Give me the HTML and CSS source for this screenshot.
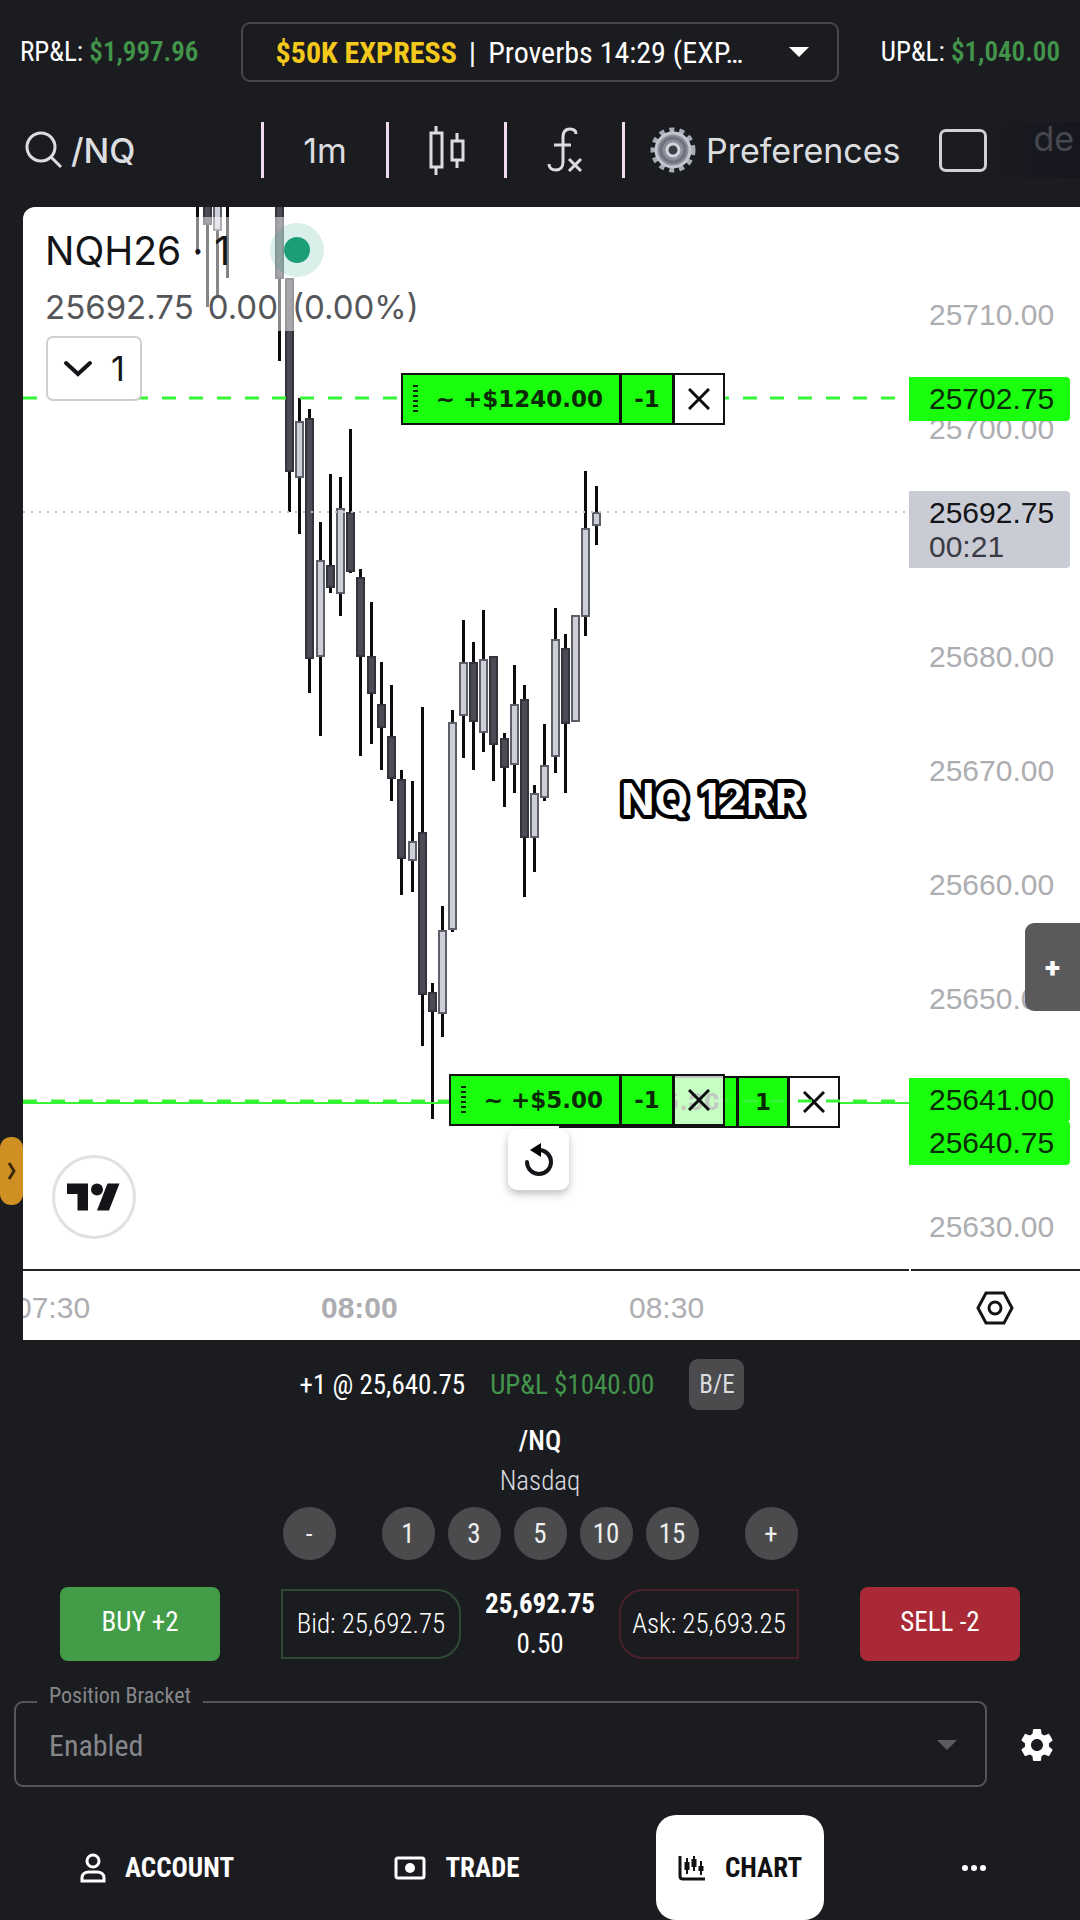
FILE: index.html
```html
<!DOCTYPE html>
<html lang="en">
<head>
    <meta charset="UTF-8">
    <meta name="viewport" content="width=device-width, initial-scale=1.0">
    <title>/NQ Chart</title>
    <link rel="stylesheet" href="styles.css">
</head>
<body>
    <header class="account-bar">
        <div class="pnl">RP&amp;L: <strong>$1,997.96</strong></div>
        <div class="account-select">
            <label for="account">$50K EXPRESS</label>
            <span class="divider">|</span>
            <select id="account">
                <option>Proverbs 14:29 (EXP…</option>
            </select>
            <svg class="caret" viewBox="0 0 20 10"><path d="M0 0h20L10 10z"/></svg>
        </div>
        <div class="pnl">UP&amp;L: <strong>$1,040.00</strong></div>
    </header>

    <div class="toolbar">
        <button class="tool tool-search" type="button">
            <svg width="38" height="38" viewBox="0 0 38 38"><circle cx="16" cy="16" r="14"/><path d="M26 26l10 10"/></svg>
            /NQ
        </button>
        <button class="tool" type="button">1m</button>
        <button class="tool" type="button" aria-label="Chart style">
            <svg width="38" height="52" viewBox="0 0 38 52"><path d="M3 9h11v34H3zM8 2v7M8 43v8M24 17h11v19H24zM29 9v8M29 36v8"/></svg>
        </button>
        <button class="tool" type="button" aria-label="Indicators">
            <svg width="36" height="46" viewBox="0 0 36 46"><path d="M29 7c0-4-3-5-6-5-5 0-7 3-7 8v25c0 5-3 8-7 8-4 0-7-2-7-6M7 18h17M22 32l12 12M34 32L22 44"/></svg>
        </button>
        <button class="tool tool-preferences" type="button">
            <svg class="cog" width="46" height="46" viewBox="0 0 46 46">
                <circle class="cog-teeth" cx="23" cy="23" r="20"/>
                <circle class="cog-body" cx="23" cy="23" r="17"/>
                <circle class="cog-ring" cx="23" cy="23" r="12"/>
                <circle class="cog-hub" cx="23" cy="23" r="6"/>
            </svg>
            Preferences
        </button>
        <button class="layout-box" type="button" aria-label="Layout"></button>
        <div class="saved-name">de</div>
    </div>

    <main class="chart">
        <section class="plot">
            <svg class="candles" width="886" height="1064" viewBox="23 207 886 1064">
                <g id="candles"></g>
                <path class="line-last" d="M23 512H909"/>
                <path class="line-entry" d="M23 1103H909"/>
                <path class="line-order" d="M23 398H909"/>
            </svg>

            <div class="legend">
                <div class="legend-title">NQH26 · 1 <span class="status"></span></div>
                <div class="legend-values"><span>25692.75</span><span>0.00</span><span>(0.00%)</span></div>
            </div>
            <button class="legend-toggle" type="button">
                <svg width="30" height="18" viewBox="0 0 30 18"><path d="M3 3l12 11L27 3"/></svg>
                1
            </button>

            <div class="order order-target">
                <span class="order-pnl"><i class="grip"></i>~ +$1240.00</span>
                <span class="order-qty">-1</span>
                <button class="order-close" type="button" aria-label="Cancel order"><svg width="22" height="22" viewBox="0 0 22 22"><path d="M1 1l20 20M21 1L1 21"/></svg></button>
            </div>

            <svg class="caption" width="210" height="56" viewBox="0 0 210 56"><text x="6" y="43">NQ 12RR</text></svg>

            <div class="order order-position">
                <span class="order-pnl">+$5.00</span>
                <span class="order-qty">1</span>
                <button class="order-close" type="button" aria-label="Close position"><svg width="22" height="22" viewBox="0 0 22 22"><path d="M1 1l20 20M21 1L1 21"/></svg></button>
            </div>
            <svg class="stop-line" width="886" height="4" viewBox="0 0 886 4"><path class="line-order" d="M0 2H886"/></svg>
            <button class="reset" type="button" aria-label="Reset chart">
                <svg width="30" height="34" viewBox="0 0 30 34"><path class="arc" d="M3 19a12 12 0 1 0 12-12"/><path class="head" d="M6 7L17 0v14z"/></svg>
            </button>
            <div class="order order-stop">
                <span class="order-pnl"><i class="grip"></i>~ +$5.00</span>
                <span class="order-qty">-1</span>
                <button class="order-close" type="button" aria-label="Cancel order"><svg width="22" height="22" viewBox="0 0 22 22"><path d="M1 1l20 20M21 1L1 21"/></svg></button>
            </div>

            <a class="tv-logo" href="#" aria-label="TradingView">
                <svg width="54" height="42" viewBox="0 0 36 28"><path d="M14 23H7V12H0V5h14zM28 23h-8l7-18h8z"/><circle cx="20" cy="9" r="4"/></svg>
            </a>
        </section>

        <aside class="price-axis">
            <ol class="prices">
                <li>25710.00</li>
                <li>25700.00</li>
                <li></li>
                <li>25680.00</li>
                <li>25670.00</li>
                <li>25660.00</li>
                <li>25650.00</li>
                <li></li>
                <li>25630.00</li>
            </ol>
            <div class="tag tag-target">25702.75</div>
            <div class="tag tag-last">25692.75<small>00:21</small></div>
            <div class="tag tag-stop">25641.00</div>
            <div class="tag tag-entry">25640.75</div>
        </aside>

        <div class="time-axis">
            <span class="time time-first">07:30</span>
            <span class="time time-hour">08:00</span>
            <span class="time time-last">08:30</span>
        </div>
        <button class="axis-settings" type="button" aria-label="Axis settings">
            <svg width="38" height="34" viewBox="0 0 38 34"><path d="M10 2h18l8 15-8 15H10L2 17z"/><circle cx="19" cy="17" r="6"/></svg>
        </button>

        <button class="side-tab" type="button" aria-label="Open panel">
            <svg width="10" height="20" viewBox="0 0 10 20"><path d="M2 2l5 8-5 8"/></svg>
        </button>
        <button class="add-tab" type="button">+</button>
    </main>

    <section class="ticket">
        <div class="position">
            <span>+1 @ 25,640.75</span>
            <span class="position-pnl">UP&amp;L $1040.00</span>
            <button class="breakeven" type="button">B/E</button>
        </div>
        <h1 class="symbol">/NQ</h1>
        <p class="symbol-name">Nasdaq</p>

        <div class="quantities">
            <button class="round step" type="button">-</button>
            <button class="round" type="button">1</button>
            <button class="round" type="button">3</button>
            <button class="round" type="button">5</button>
            <button class="round" type="button">10</button>
            <button class="round" type="button">15</button>
            <button class="round step" type="button">+</button>
        </div>

        <div class="order-row">
            <button class="trade buy" type="button">BUY +2</button>
            <div class="quotes">
                <div class="quote bid">Bid: 25,692.75</div>
                <div class="last"><strong>25,692.75</strong><span>0.50</span></div>
                <div class="quote ask">Ask: 25,693.25</div>
            </div>
            <button class="trade sell" type="button">SELL -2</button>
        </div>

        <div class="bracket-row">
            <fieldset class="bracket">
                <legend><label for="bracket">Position Bracket</label></legend>
                <select id="bracket" disabled>
                    <option>Enabled</option>
                </select>
                <svg class="caret" viewBox="0 0 20 10"><path d="M0 0h20L10 10z"/></svg>
            </fieldset>
            <button class="bracket-settings" type="button" aria-label="Bracket settings">
                <svg width="40" height="40" viewBox="0 0 24 24"><path d="M19.14 12.94c.04-.3.06-.61.06-.94s-.02-.64-.07-.94l2.03-1.58c.18-.14.23-.41.12-.61l-1.92-3.32c-.12-.22-.37-.29-.59-.22l-2.39.96c-.5-.38-1.03-.7-1.62-.94l-.36-2.54c-.04-.24-.24-.41-.48-.41h-3.84c-.24 0-.43.17-.47.41l-.36 2.54c-.59.24-1.13.57-1.62.94l-2.39-.96c-.22-.08-.47 0-.59.22L2.74 8.87c-.12.21-.08.47.12.61l2.03 1.58c-.05.3-.09.63-.09.94s.02.64.07.94l-2.03 1.58c-.18.14-.23.41-.12.61l1.92 3.32c.12.22.37.29.59.22l2.39-.96c.5.38 1.03.7 1.62.94l.36 2.54c.05.24.24.41.48.41h3.84c.24 0 .44-.17.47-.41l.36-2.54c.59-.24 1.13-.56 1.62-.94l2.39.96c.22.08.47 0 .59-.22l1.92-3.32c.12-.22.07-.47-.12-.61l-2.01-1.58zM12 15.6c-1.98 0-3.6-1.62-3.6-3.6s1.62-3.6 3.6-3.6 3.6 1.62 3.6 3.6-1.62 3.6-3.6 3.6z"/></svg>
            </button>
        </div>
    </section>

    <nav class="tabs">
        <a class="tab" href="#">
            <svg width="26" height="30" viewBox="0 0 26 30"><circle cx="13" cy="8" r="6"/><path d="M2 28v-3c0-4 3-6 7-6h8c4 0 7 2 7 6v3z"/></svg>
            ACCOUNT
        </a>
        <a class="tab" href="#">
            <svg width="32" height="24" viewBox="0 0 32 24"><rect x="2" y="2" width="28" height="20" rx="2"/><circle class="solid" cx="16" cy="12" r="5"/></svg>
            TRADE
        </a>
        <a class="tab active" href="#">
            <svg width="28" height="26" viewBox="0 0 28 26"><path d="M2 1v20c0 2 1 3 3 3h22"/><path class="wicks" d="M9 3v16M16 1v15M23 6v14"/><path class="bars" d="M9 7v8M16 4v8M23 11v5"/></svg>
            CHART
        </a>
        <a class="tab more" href="#" aria-label="More">
            <svg width="24" height="6" viewBox="0 0 24 6"><circle class="solid" cx="3" cy="3" r="3"/><circle class="solid" cx="12" cy="3" r="3"/><circle class="solid" cx="21" cy="3" r="3"/></svg>
        </a>
    </nav>

    <script src="chart.js"></script>
</body>
</html>
```
FILE: styles.css
```css
* {
    margin: 0;
    padding: 0;
    box-sizing: border-box;
}

body {
    font-family: 'Roboto Condensed', Roboto, sans-serif;
    font-size: 27px;
    background: #1b1c20;
    color: #fff;
    min-height: 100vh;
    display: flex;
    flex-direction: column;
    overflow-x: hidden;
}

button,
select {
    font: inherit;
    color: inherit;
    background: none;
    border: none;
    appearance: none;
}

svg {
    display: block;
    flex: none;
}

/* account bar */
.account-bar {
    display: flex;
    align-items: center;
    justify-content: space-between;
    padding: 22px 20px 0;
}

.pnl strong {
    color: #43944b;
    font-weight: 600;
}

.account-select {
    display: flex;
    align-items: center;
    width: 598px;
    height: 60px;
    padding: 0 28px 0 33px;
    border: 2px solid #47484b;
    border-radius: 9px;
    font-size: 30px;
}

.account-select label {
    color: #f3c91c;
    font-weight: 700;
}

.account-select .divider {
    margin: 0 12px;
}

.account-select select {
    flex: 1;
}

.caret {
    width: 20px;
    height: 10px;
    fill: #fff;
}

/* toolbar */
.toolbar {
    display: grid;
    grid-template-columns: 261px 125px 118px 118px auto auto 1fr;
    height: 56px;
    margin: 40px 0 29px;
    font-family: Inter, sans-serif;
    font-size: 34px;
    color: #dcdde0;
}

.tool {
    display: flex;
    align-items: center;
    justify-content: center;
    border-left: 3px solid #f0dcee;
}

.tool svg {
    fill: none;
    stroke: #dcdde0;
    stroke-width: 3;
}

.tool-search {
    justify-content: flex-start;
    gap: 8px;
    padding-left: 25px;
    border: none;
    font-weight: 500;
}

.tool-preferences {
    gap: 10px;
    padding-left: 25px;
}

.tool .cog circle {
    stroke: #a9adb8;
}

.tool .cog .cog-teeth {
    stroke-width: 5;
    stroke-dasharray: 5 5;
}

.tool .cog .cog-body {
    fill: #8b8f9b;
    stroke: #c3c6cf;
}

.tool .cog .cog-ring {
    stroke: #6f727d;
}

.tool .cog .cog-hub {
    fill: #3c3e46;
    stroke: #d4d6de;
}

.layout-box {
    width: 48px;
    height: 43px;
    margin: 7px 0 0 38px;
    border: 3px solid #cfd0d2;
    border-radius: 7px;
}

.saved-name {
    padding: 0 0 16px 47px;
    line-height: 34px;
    background: linear-gradient(90deg, #1b1c20, #15161f);
    color: #47484d;
    white-space: nowrap;
}

/* chart */
.chart {
    position: relative;
    flex: 1;
    display: grid;
    grid-template-columns: 1fr 171px;
    grid-template-rows: 1fr 69px;
    margin-left: 23px;
    background: #fff;
    border-top-left-radius: 12px;
    color: #131417;
    font-family: 'Liberation Sans', Arial, sans-serif;
    font-size: 30px;
}

.plot {
    position: relative;
    min-height: 1064px;
    overflow: hidden;
    border-bottom: 2px solid #222327;
    border-top-left-radius: 12px;
}

.candles {
    position: absolute;
    top: 0;
    left: 0;
}

.wick {
    stroke: #0c0c0e;
    stroke-width: 3;
}

.body {
    fill: #4a4b54;
    stroke: #32333b;
    stroke-width: 2;
}

.body.up {
    fill: #cdcfd8;
    stroke: #5d5e67;
}

.line-last {
    stroke: #c4c6cc;
    stroke-width: 2;
    stroke-dasharray: 2 6;
}

.line-entry {
    stroke: #35f535;
    stroke-width: 2;
}

.line-order {
    stroke: #35f535;
    stroke-width: 3;
    stroke-dasharray: 14 14 14 14 14 13;
}

.stop-line {
    position: absolute;
    top: 892px;
    left: 0;
}

.legend {
    position: absolute;
    top: 10px;
    left: 13px;
    padding-left: 9px;
    background: rgba(255, 255, 255, 0.5);
    font-family: Inter, sans-serif;
}

.legend-title {
    display: flex;
    align-items: center;
    gap: 54px;
    height: 66px;
    font-size: 39px;
}

.status {
    width: 26px;
    height: 26px;
    border-radius: 50%;
    background: #1b9e77;
    box-shadow: 0 0 0 14px rgba(27, 158, 119, 0.16);
}

.legend-values {
    display: flex;
    gap: 14px;
    height: 48px;
    line-height: 48px;
    font-size: 33px;
    color: #55565a;
}

.legend-toggle {
    position: absolute;
    top: 129px;
    left: 23px;
    display: flex;
    align-items: center;
    justify-content: center;
    gap: 18px;
    width: 96px;
    height: 65px;
    border: 2px solid #cfcfd2;
    border-radius: 7px;
    background: #fff;
    font-family: Inter, sans-serif;
    font-size: 34px;
}

.legend-toggle svg {
    fill: none;
    stroke: #131417;
    stroke-width: 4;
    stroke-linecap: round;
}

.order {
    position: absolute;
    display: flex;
    height: 52px;
    border: 2px solid #111;
    font-family: 'DejaVu Sans', sans-serif;
    font-size: 23px;
    font-weight: 700;
    color: #0b2a06;
}

.order-pnl,
.order-qty {
    display: flex;
    align-items: center;
    background: #1aff0d;
    border-right: 3px solid #111;
}

.order-pnl {
    flex: 1;
    justify-content: flex-end;
    padding: 0 16px 0 10px;
    white-space: pre;
}

.grip {
    width: 5px;
    height: 29px;
    margin-right: auto;
    background: repeating-linear-gradient(#0b2a06 0 2px, transparent 2px 5px);
}

.order-qty {
    width: 53px;
    justify-content: center;
}

.order-close {
    display: flex;
    align-items: center;
    justify-content: center;
    width: 48px;
    background: #fff;
}

.order-close svg {
    fill: none;
    stroke: #0c0c0e;
    stroke-width: 3;
}

.order-target {
    top: 166px;
    left: 378px;
    width: 324px;
}

.order-position {
    top: 869px;
    left: 536px;
    width: 281px;
}

.order-position .order-qty {
    width: 51px;
}

.order-stop {
    top: 867px;
    left: 426px;
    width: 276px;
}

.order-stop .order-close {
    background: rgba(255, 255, 255, 0.75);
}

.caption {
    position: absolute;
    top: 565px;
    left: 592px;
    font-family: Inter, sans-serif;
    font-size: 44px;
    font-weight: 700;
    fill: #fff;
    stroke: #000;
    stroke-width: 8px;
    stroke-linejoin: round;
    paint-order: stroke fill;
}

.reset {
    position: absolute;
    top: 922px;
    left: 485px;
    display: flex;
    align-items: center;
    justify-content: center;
    width: 61px;
    height: 61px;
    border-radius: 9px;
    background: #fff;
    box-shadow: 0 4px 8px rgba(0, 0, 0, 0.25);
}

.reset .arc {
    fill: none;
    stroke: #131417;
    stroke-width: 4;
    stroke-linecap: round;
}

.tv-logo {
    position: absolute;
    bottom: 30px;
    left: 29px;
    display: flex;
    align-items: center;
    justify-content: center;
    width: 84px;
    height: 84px;
    border: 3px solid #e0e1e4;
    border-radius: 50%;
    background: #fff;
    fill: #131417;
}

.price-axis {
    position: relative;
    border-bottom: 2px solid #222327;
    margin-left: 2px;
}

.prices {
    padding-top: 51px;
    list-style: none;
    color: #adaeb1;
}

.prices li {
    height: 114px;
    padding-left: 18px;
    line-height: 114px;
}

.prices li:last-child {
    height: 90px;
}

.tag {
    position: absolute;
    left: -2px;
    right: 10px;
    height: 44px;
    padding-left: 20px;
    line-height: 44px;
    border-radius: 0 4px 4px 0;
    background: #1aff0d;
    color: #0b2a06;
}

.tag small {
    display: block;
    margin-top: -8px;
    font-size: 30px;
    line-height: 40px;
    color: #3a3b42;
}

.tag-target {
    top: 170px;
}

.tag-last {
    top: 284px;
    height: 77px;
    background: #c9cbd5;
    color: #131417;
}

.tag-stop {
    top: 871px;
}

.tag-entry {
    top: 914px;
}

.time-axis {
    position: relative;
    overflow: hidden;
    line-height: 74px;
    color: #adaeb1;
}

.time {
    position: absolute;
}

.time-first {
    left: -8px;
}

.time-hour {
    left: 298px;
    font-weight: 700;
}

.time-last {
    left: 606px;
}

.axis-settings {
    display: flex;
    align-items: center;
    justify-content: center;
    padding-top: 4px;
}

.axis-settings svg {
    fill: none;
    stroke: #131417;
    stroke-width: 3;
}

.side-tab {
    position: absolute;
    top: 930px;
    left: -23px;
    display: flex;
    align-items: center;
    justify-content: center;
    width: 23px;
    height: 68px;
    border-radius: 11px;
    background: #d08f22;
}

.side-tab svg {
    fill: none;
    stroke: #3c2a08;
    stroke-width: 3;
}

.add-tab {
    position: absolute;
    top: 716px;
    right: 0;
    width: 55px;
    height: 88px;
    border-radius: 9px 0 0 9px;
    background: #5a5a5b;
    color: #fff;
    font-family: Roboto, sans-serif;
    font-size: 28px;
    font-weight: 900;
}

/* order ticket */
.ticket {
    padding-top: 19px;
}

.position {
    display: flex;
    align-items: center;
    justify-content: center;
    gap: 25px;
    height: 51px;
    padding-right: 36px;
}

.position-pnl {
    color: #43944b;
}

.breakeven {
    width: 55px;
    height: 51px;
    margin-left: 10px;
    border-radius: 9px;
    background: #4b4b4d;
    color: #dcdde0;
    font-size: 25px;
}

.symbol {
    margin-top: 12px;
    text-align: center;
    font-size: 27px;
    font-weight: 500;
    line-height: 38px;
}

.symbol-name {
    text-align: center;
    line-height: 42px;
    font-weight: 300;
    color: #dcdde0;
}

.quantities {
    display: flex;
    justify-content: center;
    gap: 13px;
    margin-top: 5px;
}

.round {
    width: 53px;
    height: 53px;
    border-radius: 50%;
    background: #4b4b4d;
    color: #eee;
}

.step:first-child {
    margin-right: 33px;
}

.step:last-child {
    margin-left: 33px;
}

.order-row {
    display: flex;
    align-items: center;
    justify-content: space-between;
    height: 74px;
    margin-top: 27px;
    padding: 0 60px;
}

.trade {
    width: 160px;
    height: 74px;
    padding-bottom: 4px;
    border-radius: 8px;
}

.buy {
    background: #439d48;
}

.sell {
    background: #a92a36;
}

.quotes {
    display: flex;
    align-items: center;
}

.quote {
    display: flex;
    align-items: center;
    justify-content: center;
    width: 180px;
    height: 70px;
    border: 2px solid #2e4a37;
    font-weight: 300;
    white-space: nowrap;
}

.bid {
    border-radius: 0 24px 24px 0;
}

.ask {
    border-color: #4a1f2a;
    border-radius: 24px 0 0 24px;
}

.last {
    display: flex;
    flex-direction: column;
    align-items: center;
    width: 158px;
    line-height: 40px;
}

.bracket-row {
    display: flex;
    align-items: flex-end;
    margin-top: 23px;
    padding: 0 20px 0 14px;
}

.bracket {
    position: relative;
    flex: 1;
    height: 103px;
    padding: 0 27px 0 21px;
    border: 2px solid #555659;
    border-radius: 9px;
    color: #86878a;
    font-size: 30px;
}

.bracket legend {
    padding: 0 12px 12px;
    font-size: 22px;
    line-height: 24px;
}

.bracket select {
    width: 100%;
    height: 50px;
    padding-left: 12px;
    opacity: 1;
}

.bracket .caret {
    position: absolute;
    right: 28px;
    bottom: 35px;
    fill: #5b5c5f;
}

.bracket-settings {
    margin: 0 3px 22px 30px;
    fill: #fff;
}

/* bottom tabs */
.tabs {
    display: grid;
    grid-template-columns: 314px 286px 280px 1fr;
    justify-items: center;
    margin-top: 28px;
    padding-right: 12px;
}

.tab {
    display: flex;
    align-items: center;
    justify-content: center;
    gap: 19px;
    height: 105px;
    padding: 0 22px;
    color: #fff;
    font-size: 27px;
    font-weight: 700;
    text-decoration: none;
}

.tab svg {
    fill: none;
    stroke: currentColor;
    stroke-width: 3;
}

.tab .solid {
    fill: currentColor;
    stroke: none;
}

.tab .wicks {
    stroke-width: 2;
}

.tab .bars {
    stroke-width: 5;
}

.tab.active {
    border-radius: 20px;
    background: #fff;
    color: #111;
}
```
FILE: chart.js
```js
// x, high, body top, body bottom, low, up
const candles = [
    [197, 190, 190, 190, 255, 0],
    [207, 190, 190, 225, 307, 0],
    [217, 190, 190, 231, 297, 1],
    [227, 190, 190, 190, 278, 0],
    [279, 190, 190, 279, 361, 0],
    [289, 278, 278, 472, 512, 0],
    [299, 398, 421, 478, 534, 1],
    [309, 409, 418, 659, 693, 0],
    [320, 522, 560, 657, 736, 1],
    [330, 474, 565, 588, 593, 0],
    [340, 477, 508, 594, 616, 1],
    [350, 429, 512, 572, 573, 0],
    [360, 569, 577, 657, 756, 0],
    [371, 602, 656, 694, 744, 0],
    [381, 662, 704, 728, 770, 0],
    [391, 685, 736, 779, 801, 0],
    [401, 770, 779, 859, 895, 0],
    [412, 781, 841, 861, 892, 1],
    [422, 707, 832, 995, 1046, 0],
    [432, 983, 992, 1012, 1119, 0],
    [442, 906, 930, 1014, 1037, 1],
    [452, 710, 722, 930, 932, 1],
    [463, 620, 662, 716, 758, 1],
    [473, 642, 662, 722, 770, 0],
    [483, 610, 659, 733, 752, 1],
    [493, 656, 656, 745, 781, 0],
    [504, 733, 738, 768, 807, 0],
    [514, 665, 704, 765, 793, 1],
    [524, 685, 699, 838, 897, 0],
    [534, 785, 793, 838, 872, 1],
    [544, 724, 765, 798, 801, 1],
    [555, 608, 639, 757, 773, 1],
    [565, 634, 648, 724, 793, 0],
    [575, 615, 615, 722, 722, 1],
    [585, 471, 528, 617, 636, 1],
    [596, 486, 512, 526, 545, 1]
];

document.getElementById('candles').innerHTML = candles.map(([x, high, top, bottom, low, up]) => {
    const wick = `<path class="wick" d="M${x + 0.5} ${high}V${low}"/>`;
    const body = `<rect class="body${up ? ' up' : ''}" x="${x - 3}" y="${top + 1}" width="7" height="${Math.max(bottom - top - 2, 0)}"/>`;
    return wick + body;
}).join('');
```
